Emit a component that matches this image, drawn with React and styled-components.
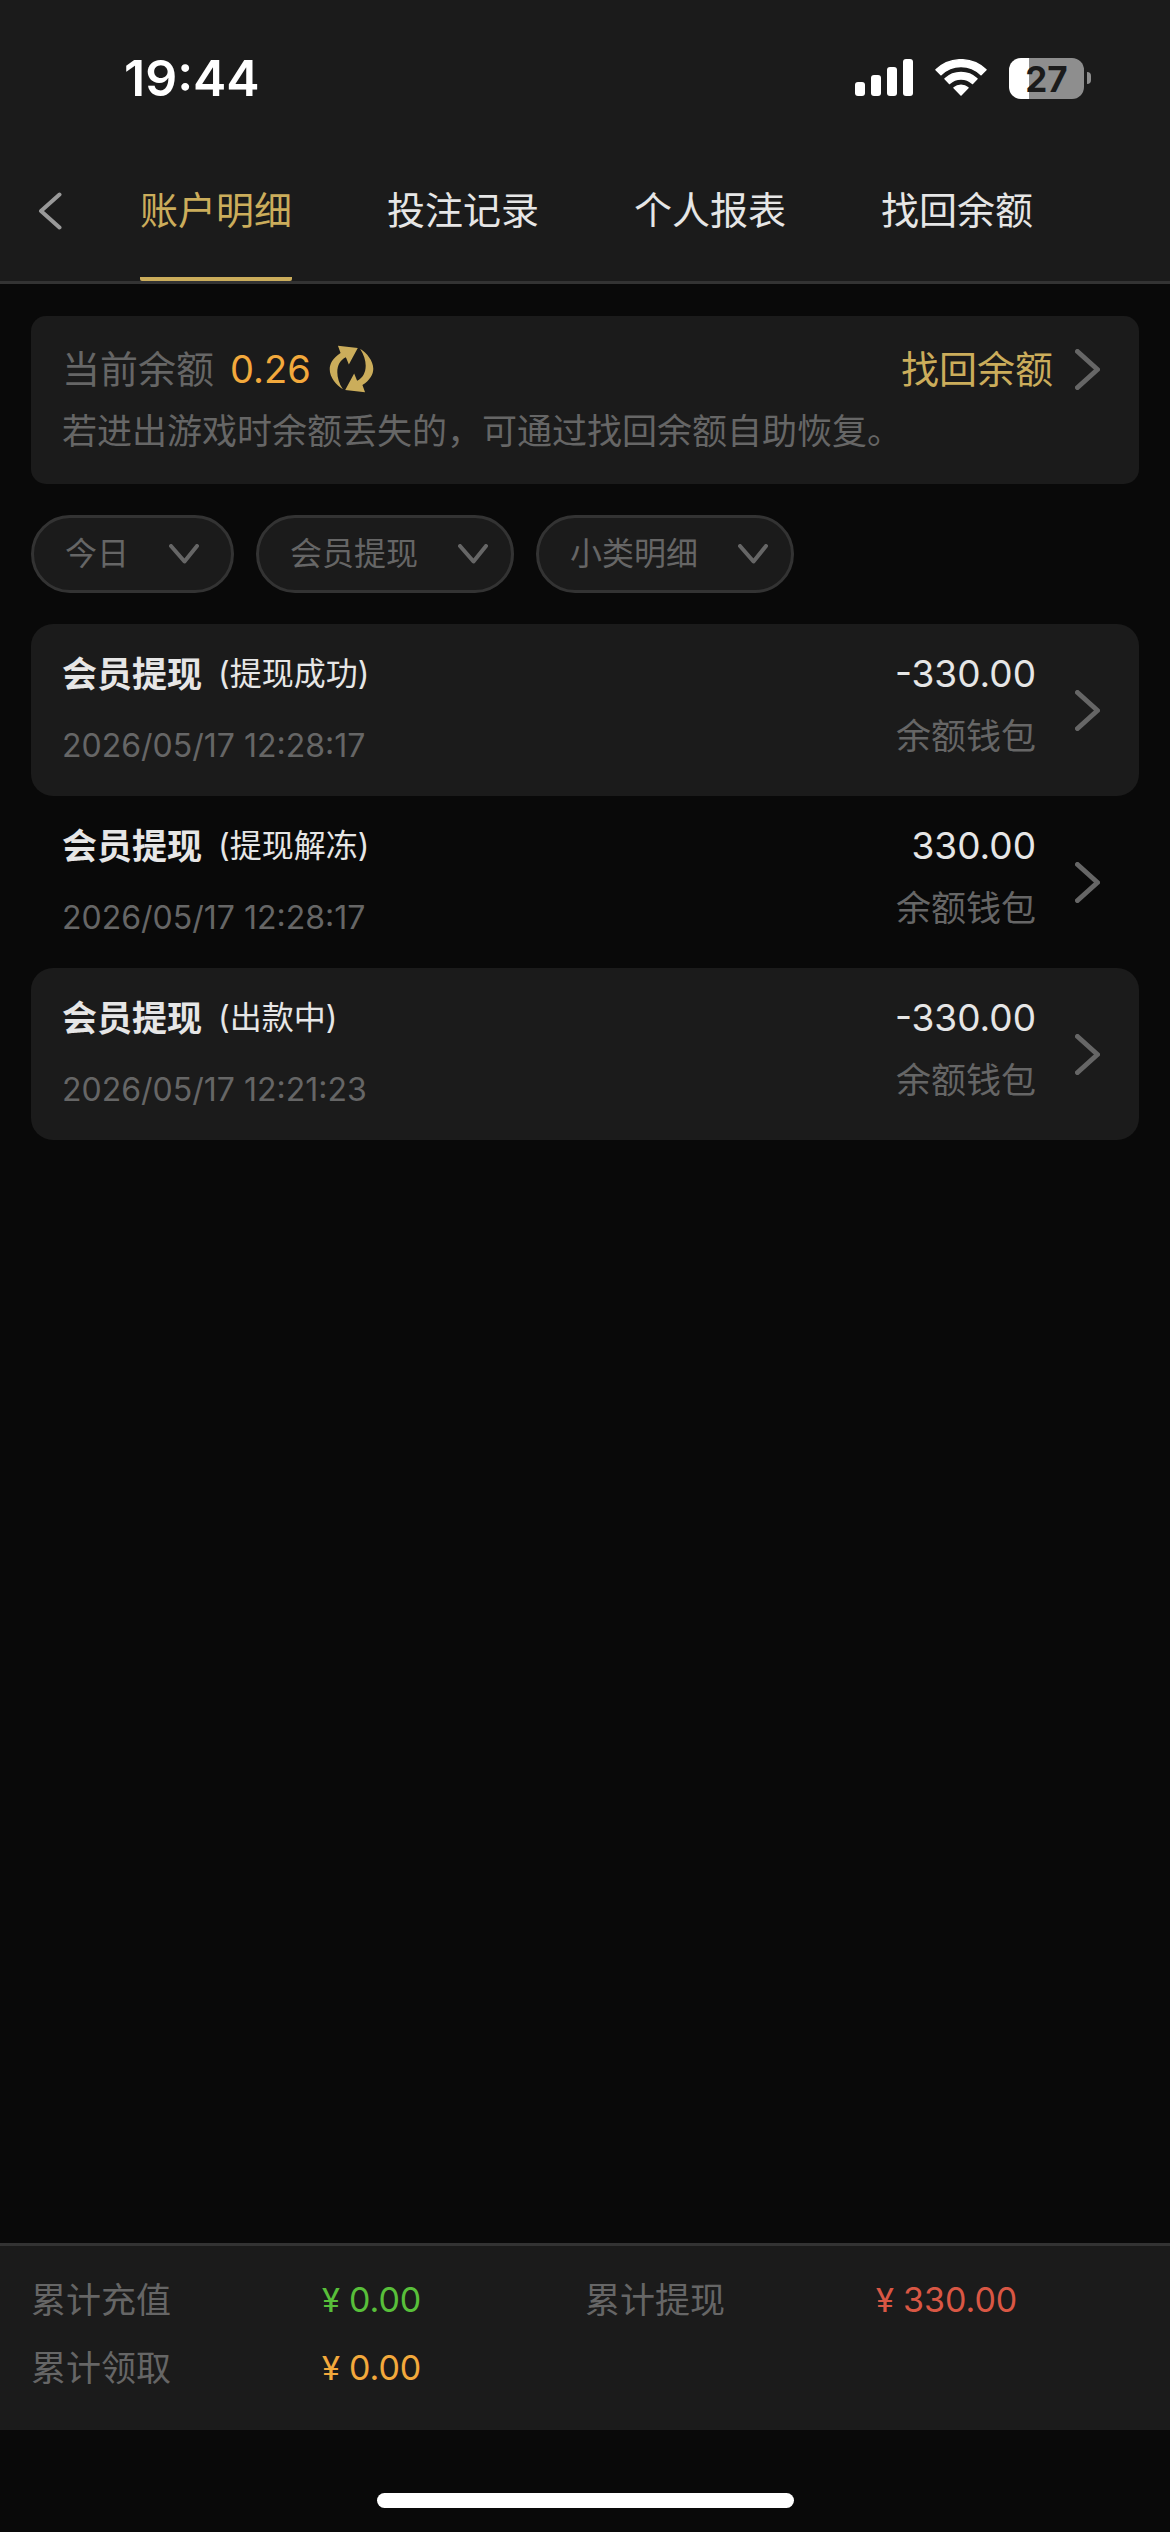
import React from 'react'
import styled, { createGlobalStyle } from 'styled-components'

const GlobalStyle = createGlobalStyle`
  * {
    box-sizing: border-box;
  }
  body {
    margin: 0;
    background: #090909;
    color: #e6e6e6;
    font-family: Inter, "Noto Sans CJK SC", sans-serif;
  }
  a {
    color: inherit;
    text-decoration: none;
  }
`;

const Page = styled.div`
  display: flex;
  flex-direction: column;
  min-height: 100vh;
`;
const Header = styled.header`
  background: #1b1b1b;
  border-bottom: 3px solid #333;
`;

const StatusBar = styled.div`
  display: flex;
  align-items: center;
  justify-content: space-between;
  padding: 48px 79px 33px 124px;
`;
const Time = styled.span`
  font-size: 50px;
  font-weight: 600;
  line-height: 60px;
  color: #fff;
`;
const StatusIcons = styled.div`
  display: flex;
  align-items: center;
  gap: 22px;
`;
const BatteryWrapper = styled.div`
  display: flex;
  align-items: center;
  gap: 3px;
`;
const BatteryBody = styled.div`
  width: 75px;
  height: 41px;
  border-radius: 12px;
  background: linear-gradient(to right, #fff 27%, #8e8e8e 27%);
  color: #1b1b1b;
  font-size: 35px;
  font-weight: 700;
  line-height: 42px;
  text-align: center;
`;
const BatteryTip = styled.div`
  width: 4px;
  height: 12px;
  border-radius: 0 4px 4px 0;
  background: #8e8e8e;
`;

const Nav = styled.nav`
  display: flex;
  height: 140px;
`;
const BackButton = styled.button`
  display: flex;
  align-items: center;
  width: 140px;
  padding: 0 0 0 38px;
  border: 0;
  background: none;
  color: #999;
`;
const Tabs = styled.div`
  display: flex;
  gap: 95px;
`;
const Tab = styled.a`
  border-bottom: 4px solid ${props => props.$active ? '#cbad5b' : 'transparent'};
  border-radius: 2px;
  color: ${props => props.$active ? '#cbad5b' : '#e6e6e6'};
  font-size: 38px;
  line-height: 138px;
  white-space: nowrap;
`;

const Main = styled.main`
  display: flex;
  flex: 1;
  flex-direction: column;
  gap: 31px;
  padding: 32px 31px;
`;
const BalanceCard = styled.section`
  display: flex;
  flex-direction: column;
  gap: 16px;
  padding: 30px 39px 30px 31px;
  border-radius: 15px;
  background: #1b1b1b;
  color: #666;
`;
const BalanceRow = styled.div`
  display: flex;
  align-items: center;
  height: 46px;
  font-size: 38px;
  line-height: 46px;
`;
const Balance = styled.span`
  margin-left: 16px;
  color: #f3a93c;
`;
const RefreshButton = styled.button`
  display: flex;
  margin-left: 18px;
  padding: 0;
  border: 0;
  background: none;
  color: #cbad5b;
`;
const RecoverLink = styled.a`
  display: flex;
  align-items: center;
  gap: 22px;
  margin-left: auto;
`;
const Gold = styled.span`
  color: #cbad5b;
`;
const Tip = styled.p`
  margin: 0;
  font-size: 35px;
  line-height: 46px;
`;

const Filters = styled.div`
  display: flex;
  gap: 22px;
`;
const Filter = styled.label`
  display: flex;
  align-items: center;
  gap: 39px;
  min-width: 203px;
  height: 78px;
  padding: 0 23px 0 31px;
  border: 3px solid #333;
  border-radius: 39px;
  background: #1b1b1b;
  color: #666;
`;
const Select = styled.select`
  appearance: none;
  padding: 0;
  border: 0;
  background: none;
  color: inherit;
  font-family: inherit;
  font-size: 32px;
  line-height: 46px;
`;

const List = styled.ul`
  margin: 0;
  padding: 0;
  list-style: none;
`;
const Item = styled.li`
  border-radius: 22px;

  &:nth-child(odd) {
    background: #1b1b1b;
  }
`;
const ItemLink = styled.a`
  display: flex;
  align-items: center;
  gap: 39px;
  padding: 27px 39px 27px 31px;
  line-height: 46px;
`;
const ItemInfo = styled.div`
  display: flex;
  flex: 1;
  flex-direction: column;
  gap: 26px;
`;
const ItemTitle = styled.div`
  display: flex;
  align-items: center;
  gap: 16px;
`;
const Name = styled.span`
  font-size: 35px;
  font-weight: 700;
`;
const Status = styled.span`
  font-size: 32px;
`;
const Muted = styled.span`
  color: #666;
  font-size: ${props => props.$small ? '32px' : '35px'};
`;
const ItemAmount = styled.div`
  display: flex;
  align-self: flex-start;
  flex-direction: column;
  gap: 16px;
  text-align: right;
`;
const Amount = styled.span`
  font-size: 37px;
`;

const Footer = styled.footer`
  padding: 31px 31px 39px;
  border-top: 3px solid #333;
  background: #1b1b1b;
`;
const Totals = styled.dl`
  display: grid;
  grid-template-columns: 1fr 1fr;
  row-gap: 22px;
  margin: 0;
  font-size: 35px;
  line-height: 46px;
`;
const Total = styled.div`
  display: flex;
`;
const TotalLabel = styled.dt`
  flex: 0 0 291px;
  color: #666;
`;
const TotalValue = styled.dd`
  display: flex;
  gap: 9px;
  margin: 0;
  color: ${props => props.$color};
  font-size: 34px;
`;
const Currency = styled.span`
  font-family: Roboto, sans-serif;
`;
const HomeArea = styled.div`
  display: flex;
  justify-content: center;
  padding: 63px 0 24px;
`;
const HomeBar = styled.div`
  width: 417px;
  height: 15px;
  border-radius: 8px;
  background: #fff;
`;

const SignalIcon = () => (
  <svg width="58" height="38" viewBox="0 0 58 38" fill="#fff">
    <rect x="0" y="23" width="10" height="14" rx="3" />
    <rect x="16" y="16" width="10" height="21" rx="3" />
    <rect x="32" y="8" width="10" height="29" rx="3" />
    <rect x="48" y="0" width="10" height="37" rx="3" />
  </svg>
);

const WifiIcon = () => (
  <svg width="52" height="38" viewBox="0 0 52 38" fill="#fff" stroke="#fff" strokeWidth="1.5" strokeLinejoin="round">
    <path d="M1 10.8A36 36 0 0 1 51 10.8L46 15.8A28.5 28.5 0 0 0 6 15.8Z" />
    <path d="M10 19.8A23.5 23.5 0 0 1 42 19.8L37.5 24.5A16.8 16.8 0 0 0 14.5 24.5Z" />
    <path d="M19 28.8A10.5 10.5 0 0 1 33 28.8L26 36Z" />
  </svg>
);

const RefreshIcon = () => (
  <svg width="45" height="48" viewBox="0 0 136 145" fill="currentColor">
    <path d="M42 134C8 112 -24 62 35 24L27 2L87 9L60 59L51 37C22 50 15 92 42 134Z" />
    <path transform="rotate(180 68 72.5)" d="M42 134C8 112 -24 62 35 24L27 2L87 9L60 59L51 37C22 50 15 92 42 134Z" />
  </svg>
);

const BackIcon = () => (
  <svg width="24" height="38" viewBox="0 0 24 38" fill="none" stroke="currentColor" strokeWidth="4" strokeLinecap="round" strokeLinejoin="round">
    <path d="M21.5 2.5L3 19L21.5 35.5" />
  </svg>
);

const RightIcon = () => (
  <svg width="25" height="41" viewBox="0 0 25 41" fill="none" stroke="#666" strokeWidth="5" strokeLinecap="round" strokeLinejoin="round">
    <path d="M2.5 2.5L22.5 20.5L2.5 38.5" />
  </svg>
);

const DownIcon = () => (
  <svg width="30" height="20" viewBox="0 0 30 20" fill="none" stroke="currentColor" strokeWidth="4" strokeLinecap="round" strokeLinejoin="round">
    <path d="M2 2L15.5 17.5L28 2" />
  </svg>
);

const tabs = ['账户明细', '投注记录', '个人报表', '找回余额'];
const filters = ['今日', '会员提现', '小类明细'];

const records = [
  { name: '会员提现', status: '提现成功', time: '2026/05/17 12:28:17', amount: '-330.00', wallet: '余额钱包' },
  { name: '会员提现', status: '提现解冻', time: '2026/05/17 12:28:17', amount: '330.00', wallet: '余额钱包' },
  { name: '会员提现', status: '出款中', time: '2026/05/17 12:21:23', amount: '-330.00', wallet: '余额钱包' },
];

const totals = [
  { label: '累计充值', value: '0.00', color: '#58bf3a' },
  { label: '累计提现', value: '330.00', color: '#d95744' },
  { label: '累计领取', value: '0.00', color: '#f3a93c' },
];

export default function App() {
  return (
    <Page>
      <GlobalStyle />
      <Header>
        <StatusBar>
          <Time>19:44</Time>
          <StatusIcons>
            <SignalIcon />
            <WifiIcon />
            <BatteryWrapper>
              <BatteryBody>27</BatteryBody>
              <BatteryTip />
            </BatteryWrapper>
          </StatusIcons>
        </StatusBar>
        <Nav>
          <BackButton aria-label="返回"><BackIcon /></BackButton>
          <Tabs>
            {tabs.map((tab, index) => (
              <Tab key={tab} href="#" $active={index === 0}>{tab}</Tab>
            ))}
          </Tabs>
        </Nav>
      </Header>

      <Main>
        <BalanceCard>
          <BalanceRow>
            <span>当前余额</span>
            <Balance>0.26</Balance>
            <RefreshButton aria-label="刷新"><RefreshIcon /></RefreshButton>
            <RecoverLink href="#">
              <Gold>找回余额</Gold>
              <RightIcon />
            </RecoverLink>
          </BalanceRow>
          <Tip>若进出游戏时余额丢失的，可通过找回余额自助恢复。</Tip>
        </BalanceCard>

        <Filters>
          {filters.map(filter => (
            <Filter key={filter}>
              <Select aria-label={filter}>
                <option>{filter}</option>
              </Select>
              <DownIcon />
            </Filter>
          ))}
        </Filters>

        <List>
          {records.map((record, index) => (
            <Item key={index}>
              <ItemLink href="#">
                <ItemInfo>
                  <ItemTitle>
                    <Name>{record.name}</Name>
                    <Status>({record.status})</Status>
                  </ItemTitle>
                  <Muted $small>{record.time}</Muted>
                </ItemInfo>
                <ItemAmount>
                  <Amount>{record.amount}</Amount>
                  <Muted>{record.wallet}</Muted>
                </ItemAmount>
                <RightIcon />
              </ItemLink>
            </Item>
          ))}
        </List>
      </Main>

      <Footer>
        <Totals>
          {totals.map(total => (
            <Total key={total.label}>
              <TotalLabel>{total.label}</TotalLabel>
              <TotalValue $color={total.color}>
                <Currency>¥</Currency>
                <span>{total.value}</span>
              </TotalValue>
            </Total>
          ))}
        </Totals>
      </Footer>
      <HomeArea>
        <HomeBar />
      </HomeArea>
    </Page>
  )
}
